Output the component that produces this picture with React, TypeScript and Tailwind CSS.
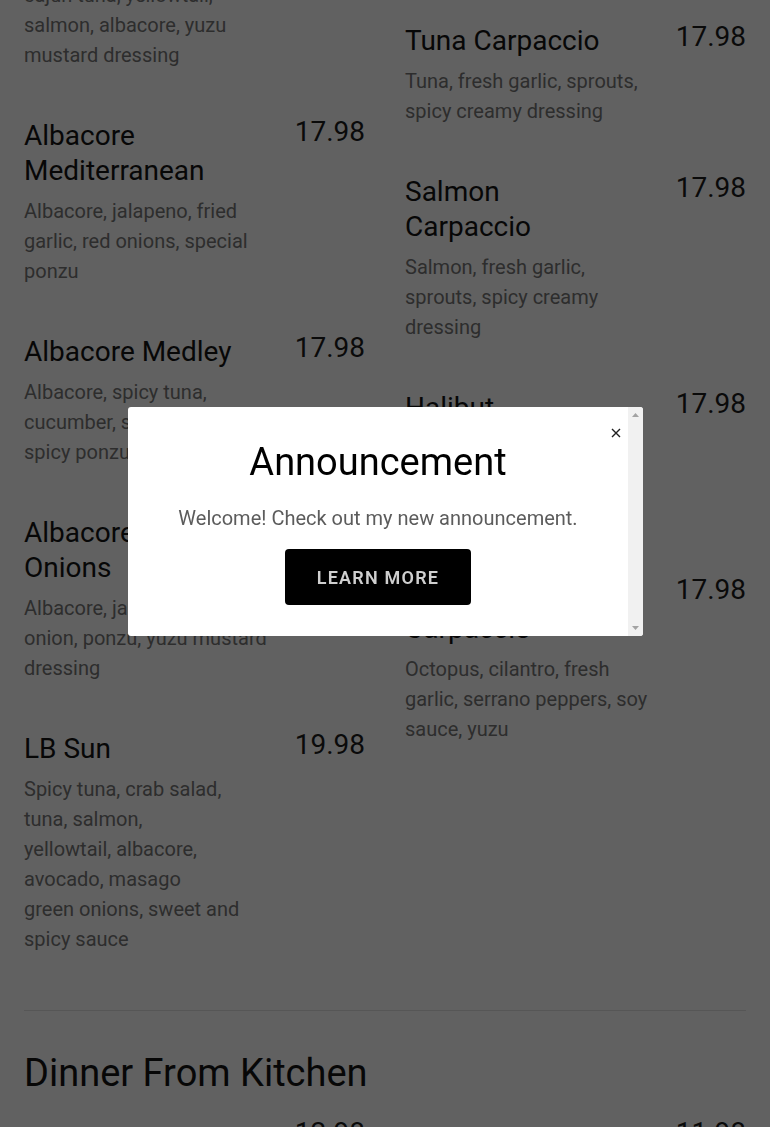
import React from "react";

type Item = { name: string; price: string; desc: string[] };

const left: Item[] = [
  {
    name: "Rainbow Carpaccio",
    price: "17.98",
    desc: ["Spicy crab, avocado, seared", "cajun tuna, yellowtail,", "salmon, albacore, yuzu", "mustard dressing"],
  },
  {
    name: "Albacore Mediterranean",
    price: "17.98",
    desc: ["Albacore, jalapeno, fried", "garlic, red onions, special", "ponzu"],
  },
  {
    name: "Albacore Medley",
    price: "17.98",
    desc: ["Albacore, spicy tuna,", "cucumber, sprouts, masago,", "spicy ponzu"],
  },
  {
    name: "Albacore Crispy Onions",
    price: "17.98",
    desc: ["Albacore, jalapeno, crispy", "onion, ponzu, yuzu mustard", "dressing"],
  },
  {
    name: "LB Sun",
    price: "19.98",
    desc: [
      "Spicy tuna, crab salad,",
      "tuna, salmon,",
      "yellowtail, albacore,",
      "avocado, masago",
      "green onions, sweet and",
      "spicy sauce",
    ],
  },
];

const right: Item[] = [
  {
    name: "Sashimi Salad",
    price: "16.98",
    desc: ["Assorted sashimi, mixed", "greens, yuzu dressing"],
  },
  {
    name: "Tuna Carpaccio",
    price: "17.98",
    desc: ["Tuna, fresh garlic, sprouts,", "spicy creamy dressing"],
  },
  {
    name: "Salmon Carpaccio",
    price: "17.98",
    desc: ["Salmon, fresh garlic,", "sprouts, spicy creamy", "dressing"],
  },
  {
    name: "Halibut Carpaccio",
    price: "17.98",
    desc: ["Halibut, fresh garlic,", "sprouts, yuzu ponzu"],
  },
  {
    name: "Octopus Carpaccio",
    price: "17.98",
    desc: ["Octopus, cilantro, fresh", "garlic, serrano peppers, soy", "sauce, yuzu"],
  },
];

const dinnerLeft: Item[] = [
  { name: "Chicken Teriyaki", price: "12.98", desc: ["Grilled chicken, teriyaki", "sauce, steamed rice"] },
];
const dinnerRight: Item[] = [
  { name: "Beef Yakisoba", price: "11.98", desc: ["Stir-fried noodles, beef,", "vegetables"] },
];

function MenuItem({ item, nameOffset = false }: { item: Item; nameOffset?: boolean }) {
  return (
    <div className="flex justify-between items-start">
      <div className={nameOffset ? "w-[250px] pt-[8px]" : "w-[250px]"}>
        <div className="max-w-[218px] text-[28px] leading-[35px] text-[#141414]">{item.name}</div>
        <div className="mt-[8.5px] text-[20px] leading-[30px] text-[#777777] whitespace-nowrap">
          {item.desc.map((l, i) => (
            <React.Fragment key={i}>
              {l}
              {i < item.desc.length - 1 && <br />}
            </React.Fragment>
          ))}
        </div>
      </div>
      <div className="text-[28px] leading-[27px] text-[#1c1c1c]">{item.price}</div>
    </div>
  );
}

function Column({ items, nameOffset = false }: { items: Item[]; nameOffset?: boolean }) {
  return (
    <div className="flex flex-col gap-[47.5px]">
      {items.map((it) => (
        <MenuItem key={it.name} item={it} nameOffset={nameOffset} />
      ))}
    </div>
  );
}

export default function App() {
  return (
    <div className="relative min-h-screen bg-white font-['Roboto',_'Liberation_Sans',_sans-serif]">
      <div className="px-6 mt-[-128.5px] pb-20">
        <div className="grid grid-cols-2 gap-x-10 items-start">
          <Column items={left} />
          <Column items={right} />
        </div>
        <div className="mt-[56px] border-t border-[#e3e3e3]" />
        <h2 className="mt-[40px] text-[38px] leading-[45px] text-[#141414]">Dinner From Kitchen</h2>
        <div className="mt-[23px] grid grid-cols-2 gap-x-10 items-start">
          <Column items={dinnerLeft} nameOffset />
          <Column items={dinnerRight} nameOffset />
        </div>
      </div>

      <div className="fixed inset-0 bg-black/[0.62]" />

      <div className="fixed left-[128px] top-[407px] w-[515px] h-[229px] bg-white rounded-[3px] flex overflow-hidden">
        <div className="relative flex-1 flex flex-col items-center pt-[33px]">
          <button className="absolute top-[21px] left-[483px] w-[10px] h-[10px]" aria-label="Close">
            <svg width="10" height="10" viewBox="0 0 10 10">
              <path d="M1 1L9 9M9 1L1 9" stroke="#1f1f1f" strokeWidth="1.4" fill="none" />
            </svg>
          </button>
          <h3 className="text-[38px] leading-[44px] text-black">Announcement</h3>
          <p className="mt-[22px] text-[20px] leading-[24px] text-[#5c5c5c]">
            Welcome! Check out my new announcement.
          </p>
          <button className="mt-[19px] w-[186px] h-[56px] bg-black rounded-[4px] text-[18px] font-semibold tracking-[1.2px] text-[#cfcfcf]">
            LEARN MORE
          </button>
        </div>
        <div className="w-[15px] bg-[#f1f1f1] flex flex-col items-center justify-between py-[6px]">
          <svg width="7" height="4" viewBox="0 0 7 4">
            <path d="M3.5 0L7 4H0Z" fill="#a3a3a3" />
          </svg>
          <svg width="7" height="4" viewBox="0 0 7 4">
            <path d="M0 0H7L3.5 4Z" fill="#a3a3a3" />
          </svg>
        </div>
      </div>
    </div>
  );
}
